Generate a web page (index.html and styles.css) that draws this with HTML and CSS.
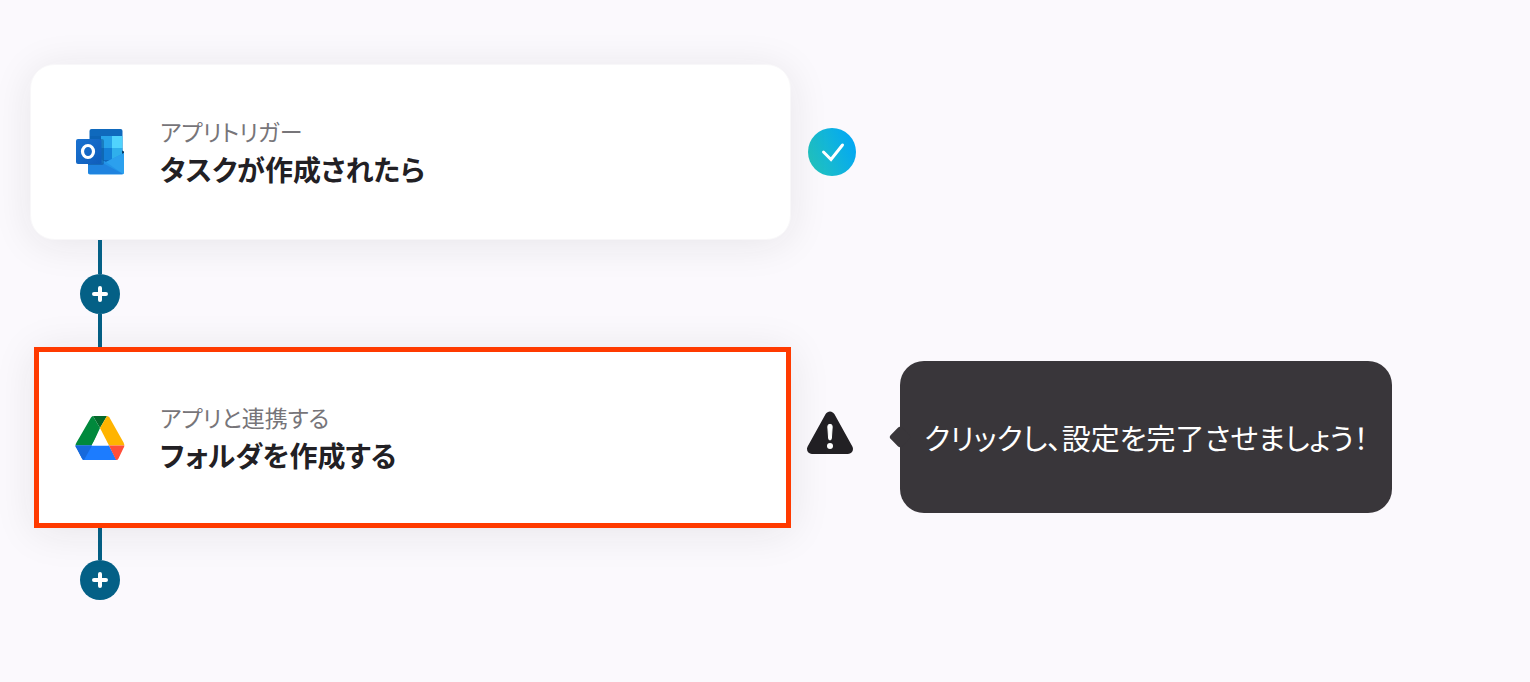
FILE: index.html
```html
<!DOCTYPE html>
<html lang="ja">
<head>
    <meta charset="UTF-8">
    <meta name="viewport" content="width=device-width, initial-scale=1.0">
    <title>フローボット</title>
    <link rel="stylesheet" href="styles.css">
</head>
<body>
    <main class="flow">
        <div class="step">
            <section class="card">
                <svg class="app-icon" viewBox="0 0 50 50" aria-hidden="true">
                    <defs>
                        <linearGradient id="badge" x1="0" y1="0" x2="1" y2="1">
                            <stop offset="0" stop-color="#1a72d0"/>
                            <stop offset="1" stop-color="#0f5dbb"/>
                        </linearGradient>
                    </defs>
                    <rect x="14.500" y="2" width="33" height="42" rx="2" fill="#0f69bd"/>
                    <rect x="15" y="9" width="11" height="12" fill="#0c63b5"/>
                    <rect x="26" y="9" width="11" height="12" fill="#27a3ea"/>
                    <rect x="37" y="9" width="10.500" height="12" fill="#50d3fd"/>
                    <rect x="15" y="21" width="11" height="12" fill="#0d539f"/>
                    <rect x="26" y="21" width="11" height="12" fill="#1480d8"/>
                    <rect x="37" y="21" width="10.500" height="12" fill="#2fafec"/>
                    <path d="M47 23.500l2 1v3h-2z" fill="#0a3c66"/>
                    <path d="M13 25l18 10 18-9v19.500a2 2 0 0 1-2 2H15a2 2 0 0 1-2-2z" fill="#2394e8"/>
                    <path d="M31 35l18-9v19a2 2 0 0 1-1 2z" fill="#2ba0ee"/>
                    <path d="M13 28l35 19H15a2 2 0 0 1-2-2z" fill="#1f83df"/>
                    <path d="M13 12h14a2 2 0 0 1 2 2v22a2 2 0 0 1-2 2H13z" fill="#07447f" opacity=".4"/>
                    <rect x="1" y="12" width="25.500" height="25" rx="2" fill="url(#badge)"/>
                    <ellipse cx="13" cy="24.500" rx="5.500" ry="6" fill="none" stroke="#fff" stroke-width="3.200"/>
                </svg>
                <div class="card-text">
                    <p class="kind">アプリトリガー</p>
                    <h2 class="title">タスクが作成されたら</h2>
                </div>
            </section>
            <svg class="status" viewBox="0 0 48 48" role="img" aria-label="設定済み">
                <defs>
                    <linearGradient id="done" x1="0" y1=".7" x2="1" y2=".3">
                        <stop offset="0" stop-color="#22c3bd"/>
                        <stop offset="1" stop-color="#02a7f5"/>
                    </linearGradient>
                </defs>
                <circle cx="24" cy="24" r="24" fill="url(#done)"/>
                <path d="M15.500 24l7.500 7.500 11.500-14.500" fill="none" stroke="#fff" stroke-width="3" stroke-linecap="round" stroke-linejoin="miter"/>
            </svg>
        </div>

        <div class="connector">
            <span class="line"></span>
            <button class="add" type="button" aria-label="追加">
                <svg viewBox="0 0 16 16" aria-hidden="true"><path d="M8 2v12M2 8h12"/></svg>
            </button>
            <span class="line"></span>
        </div>

        <div class="step">
            <section class="card selected">
                <svg class="app-icon" viewBox="0 0 50 50" aria-hidden="true">
                    <path d="M18 3h14l-7 12z" fill="#04692b"/>
                    <path d="M18 3q-1 0-2 1.500L1.500 29.500Q.5 31 .5 32.500H17L25 15z" fill="#00893c"/>
                    <path d="M32 3q1.500 0 2.500 1.500L48.500 29.500q.8 1.500.8 3H34L25 15z" fill="#ffb400"/>
                    <path d="M.5 32.500H17L9 47q-1.500-.5-2-1.500L1.500 35Q.5 34 .5 32.500z" fill="#1769dc"/>
                    <path d="M14.500 32.500H34L41.500 47H9q-1 0-1.500-1z" fill="#1c7cff"/>
                    <path d="M34 32.500h15.300q0 1.500-.8 2.500L43.500 45.500q-.5 1.500-2.500 1.500z" fill="#ff4e3a"/>
                    <path d="M.5 32.500H17L9 47q-1.500-.5-2-1.500L1.500 35Q.5 34 .5 32.500z" fill="#1769dc"/>
                    <path d="M25 18l8.500 14.500h-17z" fill="#fff"/>
                </svg>
                <div class="card-text">
                    <p class="kind">アプリと連携する</p>
                    <h2 class="title">フォルダを作成する</h2>
                </div>
            </section>
            <svg class="status" viewBox="0 0 48 48" role="img" aria-label="未設定">
                <path d="M22 3.500L4 36h36z" fill="#222024" stroke="#222024" stroke-width="10" stroke-linejoin="round"/>
                <path d="M19.800 13.500a2.200 2.200 0 0 1 4.400 0l-.8 12a1.400 1.400 0 0 1-2.800 0z" fill="#fff" stroke="#fff"/>
                <circle cx="22" cy="33" r="3" fill="#fff"/>
            </svg>
            <p class="tooltip" role="tooltip">クリックし、設定を完了させましょう！</p>
        </div>

        <div class="connector">
            <span class="line"></span>
            <button class="add" type="button" aria-label="追加">
                <svg viewBox="0 0 16 16" aria-hidden="true"><path d="M8 2v12M2 8h12"/></svg>
            </button>
        </div>
    </main>
</body>
</html>
```

FILE: styles.css
```css
* {
    box-sizing: border-box;
}
body {
    margin: 0;
    background-color: #fbf9fd;
    color: #222024;
    font-family: "Noto Sans CJK JP", sans-serif;
    font-feature-settings: "palt";
}
h2,
p {
    margin: 0;
}
.flow {
    padding: 64px 30px;
}
.step {
    display: flex;
    align-items: center;
}
.card {
    position: relative;
    display: flex;
    align-items: center;
    flex: 0 1 761px;
    gap: 35px;
    padding: 49px 44px;
    background-color: #fff;
    border: 1px solid #f8f7f9;
    border-radius: 24px;
    box-shadow: 0 4px 40px rgba(34, 32, 36, 0.09);
}
/* the highlight frame sits over the ends of both connector lines */
.card.selected {
    flex-basis: 757px;
    margin: -1px 0 -2px 4px;
    padding: 48px 36px 47px;
    border: 5px solid #ff3a00;
    border-radius: 0;
}
.app-icon {
    width: 50px;
    height: 50px;
    flex-shrink: 0;
}
.kind {
    color: #777579;
    font-size: 23px;
    line-height: 34px;
}
.title {
    font-size: 28px;
    font-weight: 600;
    line-height: 42px;
}
.status {
    width: 48px;
    height: 48px;
    margin-left: 17px;
    flex-shrink: 0;
    overflow: visible;
}
.connector {
    display: flex;
    flex-direction: column;
    align-items: center;
    width: 40px;
    margin-left: 50px;
}
.line,
.add {
    position: relative;
}
.line {
    width: 4px;
    height: 34px;
    background-color: #046086;
}
.add {
    display: flex;
    align-items: center;
    justify-content: center;
    width: 40px;
    height: 40px;
    padding: 0;
    border: none;
    border-radius: 50%;
    background-color: #046086;
    cursor: pointer;
}
.add svg {
    width: 16px;
    height: 16px;
    overflow: visible;
    fill: none;
    stroke: #fff;
    stroke-width: 4;
    stroke-linecap: round;
}
.selected {
    z-index: 1;
}
.tooltip {
    position: relative;
    margin-left: 44px;
    padding: 56px 24px;
    border-radius: 24px;
    background-color: #39363a;
    color: #fff;
    font-size: 29px;
    line-height: 40px;
}
.tooltip::before {
    content: "";
    position: absolute;
    top: 50%;
    left: -8px;
    width: 16px;
    height: 16px;
    border-radius: 3px;
    background-color: #39363a;
    transform: translateY(-50%) rotate(45deg);
}
```
